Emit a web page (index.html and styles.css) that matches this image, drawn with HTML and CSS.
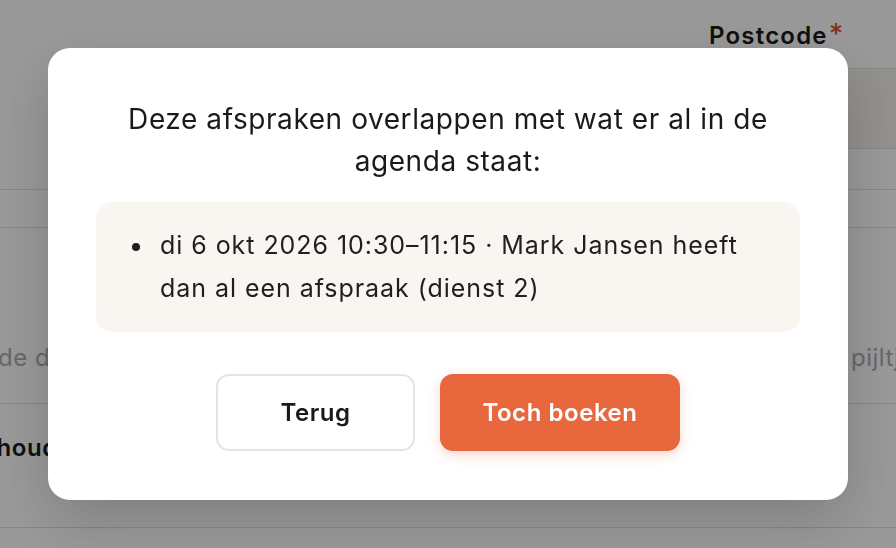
FILE: index.html
```html
<!DOCTYPE html>
<html lang="nl">
<head>
<meta charset="utf-8">
<title>Overlap</title>
<link rel="stylesheet" href="styles.css">
</head>
<body>
<div class="page">
  <div class="top-row">
    <div class="col-left"></div>
    <div class="col-right">
      <label class="field-label">Postcode<span class="req">*</span></label>
      <div class="field-input"></div>
    </div>
  </div>
  <div class="band"></div>
  <div class="hint-row">
    <span class="hint-left">de dienst en het tijdstip</span>
    <span class="hint-right">pijltjes</span>
  </div>
  <div class="section-row">
    <span class="section-title">Inhoud</span>
  </div>
  <div class="band band-bottom"></div>
</div>

<div class="backdrop">
  <div class="modal" role="dialog">
    <p class="modal-title">Deze afspraken overlappen met wat er al in de agenda staat:</p>
    <ul class="conflicts">
      <li>di 6 okt 2026 10:30–11:15 · Mark Jansen heeft dan al een afspraak (dienst 2)</li>
    </ul>
    <div class="actions">
      <button class="btn btn-secondary">Terug</button>
      <button class="btn btn-primary">Toch boeken</button>
    </div>
  </div>
</div>
</body>
</html>
```

FILE: styles.css
```css
html, body {
  margin: 0;
  padding: 0;
  height: 548px;
  overflow: hidden;
}
body {
  font-family: "Inter", "Noto Sans", sans-serif;
  color: #1a1a1a;
  background: #ffffff;
}

/* background page */
.page {
  width: 100%;
  overflow: hidden;
}
.top-row {
  display: grid;
  grid-template-columns: 709px 1fr;
  padding-top: 19px;
}
.field-label {
  display: block;
  font-size: 24px;
  font-weight: 600;
  letter-spacing: 1.2px;
  line-height: 30px;
  white-space: nowrap;
}
.req {
  color: #d9541e;
  margin-left: 1px;
  font-size: 28px;
  font-weight: 500;
  letter-spacing: 0;
}
.field-input {
  margin-top: 17px;
  height: 79px;
  margin-right: -20px;
  border: 1px solid #e6e0d8;
  background: #f3f1ed;
}
.band {
  margin-top: 40px;
  height: 37px;
  border-top: 1px solid #e6e0d8;
  border-bottom: 1px solid #e6e0d8;
}
.hint-row {
  display: grid;
  grid-template-columns: 851px 1fr;
  padding-top: 115px;
  padding-bottom: 30px;
  border-bottom: 1px solid #e6e0d8;
  font-size: 24px;
  letter-spacing: 0.5px;
  line-height: 30px;
  color: #acacac;
  white-space: nowrap;
}
.hint-left {
  margin-left: -2px;
}
.section-row {
  padding-top: 29px;
  font-size: 24px;
  font-weight: 600;
  letter-spacing: 0.6px;
  line-height: 30px;
  white-space: nowrap;
}
.section-title {
  display: inline-block;
  margin-left: -26px;
}
.band-bottom {
  margin-top: 64px;
  height: 20px;
}

/* modal */
.backdrop {
  position: fixed;
  inset: 0;
  background: rgba(0, 0, 0, 0.4);
}
.modal {
  position: absolute;
  left: 48px;
  top: 48px;
  width: 800px;
  box-sizing: border-box;
  padding: 50px 48px 49px;
  background: #ffffff;
  border-radius: 22px;
  box-shadow: 0 20px 60px rgba(0, 0, 0, 0.18);
}
.modal-title {
  margin: 0;
  text-align: center;
  font-size: 28px;
  letter-spacing: 0.57px;
  line-height: 42px;
  color: #1a1a1a;
}
.conflicts {
  list-style: none;
  margin: 20px 0 0;
  padding: 22px 24px 22px 36px;
  background: #f9f6f1;
  border-radius: 16px;
  font-size: 25px;
  letter-spacing: 0.95px;
  line-height: 43px;
  color: #1f1f1f;
}
.conflicts li {
  position: relative;
  padding-left: 28px;
}
.conflicts li::before {
  content: "";
  position: absolute;
  left: 0;
  top: 19px;
  width: 8px;
  height: 8px;
  border-radius: 50%;
  background: #1f1f1f;
}
.actions {
  display: flex;
  justify-content: center;
  gap: 25px;
  margin-top: 42px;
}
.btn {
  height: 77px;
  border-radius: 13px;
  font-family: inherit;
  font-size: 24px;
  font-weight: 600;
  letter-spacing: 0.55px;
  cursor: pointer;
}
.btn-secondary {
  width: 199px;
  background: #ffffff;
  border: 2px solid #e9e4da;
  color: #1a1a1a;
}
.btn-primary {
  width: 240px;
  background: #e8673d;
  border: none;
  color: #ffffff;
  box-shadow: 0 4px 12px rgba(232, 103, 61, 0.25);
}
```
